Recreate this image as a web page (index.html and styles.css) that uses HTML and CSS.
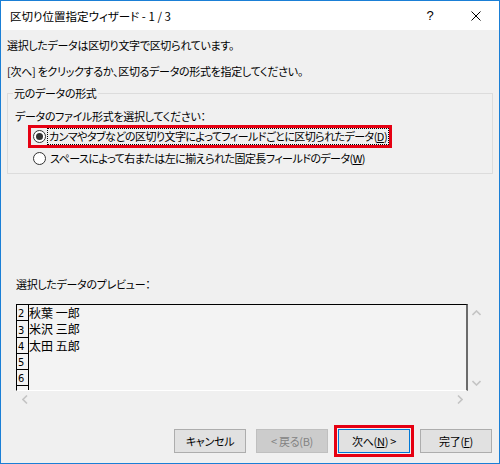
FILE: index.html
```html
<!DOCTYPE html>
<html lang="ja">
<head>
<meta charset="utf-8">
<link rel="stylesheet" href="styles.css">
</head>
<body>
<div class="window">
  <div class="titlebar">
    <div class="title">区切り位置指定ウィザード - 1 / 3</div>
    <div class="tb-btn help">?</div>
    <div class="tb-btn close">
      <svg width="10" height="10" viewBox="0 0 10 10"><path d="M0.5 0.5 L9.5 9.5 M9.5 0.5 L0.5 9.5" stroke="#000" stroke-width="1" fill="none"/></svg>
    </div>
  </div>
  <div class="content">
    <p class="msg msg1">選択したデータは区切り文字で区切られています。</p>
    <p class="msg msg2">[次へ] をクリックするか、区切るデータの形式を指定してください。</p>
    <fieldset class="group">
      <legend>元のデータの形式</legend>
      <div class="group-label">データのファイル形式を選択してください：</div>
      <div class="opts">
        <div class="opt hl">
          <span class="radio checked"></span>
          <span class="opt-label focus">カンマやタブなどの区切り文字によってフィールドごとに区切られたデータ(<u>D</u>)</span>
        </div>
        <div class="opt second">
          <span class="radio"></span>
          <span class="opt-label">スペースによって右または左に揃えられた固定長フィールドのデータ(<u>W</u>)</span>
        </div>
      </div>
    </fieldset>
    <div class="preview-label">選択したデータのプレビュー：</div>
    <div class="preview">
      <div class="list">
        <div class="row"><span class="num">2</span><span class="cell">秋葉 一郎</span></div>
        <div class="row"><span class="num">3</span><span class="cell">米沢 三郎</span></div>
        <div class="row"><span class="num">4</span><span class="cell">太田 五郎</span></div>
        <div class="row"><span class="num">5</span><span class="cell"></span></div>
        <div class="row"><span class="num">6</span><span class="cell"></span></div>
        <div class="row"><span class="num"></span><span class="cell"></span></div>
      </div>
      <div class="vscroll">
        <div class="sbtn"><svg width="9" height="6" viewBox="0 0 9 6"><path d="M0.5 5 L4.5 1 L8.5 5" stroke="#c4c4c4" stroke-width="1.6" fill="none"/></svg></div>
        <div class="sbtn"><svg width="9" height="6" viewBox="0 0 9 6"><path d="M0.5 1 L4.5 5 L8.5 1" stroke="#c4c4c4" stroke-width="1.6" fill="none"/></svg></div>
      </div>
      <div class="hscroll">
        <div class="sbtn"><svg width="6" height="9" viewBox="0 0 6 9"><path d="M5 0.5 L1 4.5 L5 8.5" stroke="#c4c4c4" stroke-width="1.6" fill="none"/></svg></div>
        <div class="sbtn"><svg width="6" height="9" viewBox="0 0 6 9"><path d="M1 0.5 L5 4.5 L1 8.5" stroke="#c4c4c4" stroke-width="1.6" fill="none"/></svg></div>
      </div>
    </div>
  </div>
  <div class="buttons">
    <div class="btn">キャンセル</div>
    <div class="btn disabled">&lt; 戻る(B)</div>
    <div class="btn default">次へ(<u>N</u>) &gt;</div>
    <div class="btn">完了(<u>F</u>)</div>
  </div>
</div>
</body>
</html>
```

FILE: styles.css
```css
* { box-sizing: border-box; }
html, body { margin: 0; padding: 0; }
body {
  width: 500px;
  height: 464px;
  overflow: hidden;
  font-family: "Noto Sans CJK JP", "Noto Sans", sans-serif;
  font-size: 11px;
  letter-spacing: -0.3px;
  color: #000;
  font-feature-settings: "palt";
}
.window {
  width: 500px;
  height: 464px;
  border: 1px solid #1a7fd6;
  background: #f0f0f0;
  display: flex;
  flex-direction: column;
}
.titlebar {
  height: 29px;
  flex-shrink: 0;
  background: #fff;
  display: flex;
  align-items: center;
}
.title {
  flex: 1;
  padding-left: 9px;
  font-size: 11.5px;
  letter-spacing: 0;
  line-height: 16px;
}
.tb-btn {
  width: 46px;
  height: 29px;
  display: flex;
  align-items: center;
  justify-content: center;
}
.help {
  font-family: "Liberation Sans", sans-serif;
  font-size: 13px;
  letter-spacing: 0;
}
.content {
  flex: 1;
  display: flex;
  flex-direction: column;
  padding: 0 6px;
}
.msg { margin: 0; line-height: 16px; }
.msg1 { margin-top: 7px; }
.msg2 { margin-top: 10px; }
.group {
  margin: 6px 0 0 0;
  padding: 0 0 6px 7px;
  border: 1px solid #dcdcdc;
  min-width: 0;
}
.group legend {
  padding: 0 1px;
  margin-left: -2px;
  line-height: 16px;
}
.group-label {
  margin-top: 7px;
  line-height: 16px;
}
.opts {
  margin-top: 4px;
  margin-left: 16px;
  display: flex;
  flex-direction: column;
  gap: 5px;
}
.opt {
  display: flex;
  align-items: center;
  height: 17px;
  width: fit-content;
}
.opt.hl { outline: 3px solid #e60012; }
.radio {
  width: 13px;
  height: 13px;
  margin-left: 2px;
  border: 1px solid #333;
  border-radius: 50%;
  background: #fff;
  display: flex;
  align-items: center;
  justify-content: center;
  flex-shrink: 0;
}
.radio.checked::after {
  content: "";
  width: 7px;
  height: 7px;
  border-radius: 50%;
  background: #333;
}
.opt-label {
  margin-left: 1px;
  padding: 0 1px 0 1px;
  border: 1px solid transparent;
  line-height: 15px;
  letter-spacing: -0.55px;
  white-space: nowrap;
}
.opt-label.focus { border: 1px dotted #000; }
.opt.second .opt-label { margin-left: 2px; }
.preview-label {
  margin-top: 102px;
  margin-left: 9px;
  line-height: 16px;
}
.preview {
  margin-top: 12px;
  margin-left: 9px;
  display: grid;
  grid-template-columns: 452px 17px;
  grid-template-rows: 87px 17px;
  width: 469px;
}
.list {
  border-top: 1px solid #000;
  border-left: 1px solid #000;
  border-right: 2px solid #6b6b6b;
  border-bottom: 1px solid #fff;
  background: #f3f3f3;
  overflow: hidden;
}
.row {
  display: flex;
  height: 16.3px;
  flex-shrink: 0;
}
.num {
  width: 12px;
  flex-shrink: 0;
  border-right: 1px solid #000;
  border-bottom: 1px solid #000;
  font-family: "DejaVu Sans Condensed", "DejaVu Sans", sans-serif;
  font-size: 11px;
  letter-spacing: 0;
  line-height: 13px;
  display: flex;
  align-items: flex-end;
  padding-left: 1px;
  font-feature-settings: normal;
}
.cell {
  font-size: 12px;
  letter-spacing: 0;
  line-height: 16px;
  white-space: pre;
  font-feature-settings: normal;
}
.vscroll {
  display: flex;
  flex-direction: column;
  justify-content: space-between;
}
.hscroll {
  display: flex;
  justify-content: space-between;
}
.sbtn {
  width: 17px;
  height: 17px;
  display: flex;
  align-items: center;
  justify-content: center;
}
.buttons {
  margin-top: auto;
  margin-bottom: 10px;
  padding-right: 7px;
  display: flex;
  justify-content: flex-end;
  gap: 10px;
}
.btn {
  width: 72px;
  height: 24px;
  border: 1px solid #adadad;
  background: #e1e1e1;
  display: flex;
  align-items: center;
  justify-content: center;
  line-height: 16px;
  white-space: nowrap;
}
.btn.disabled {
  border-color: #bfbfbf;
  background: #cccccc;
  color: #838383;
}
.btn.default {
  border-color: #0078d7;
  outline: 3px solid #e60012;
  outline-offset: 1px;
}
```
